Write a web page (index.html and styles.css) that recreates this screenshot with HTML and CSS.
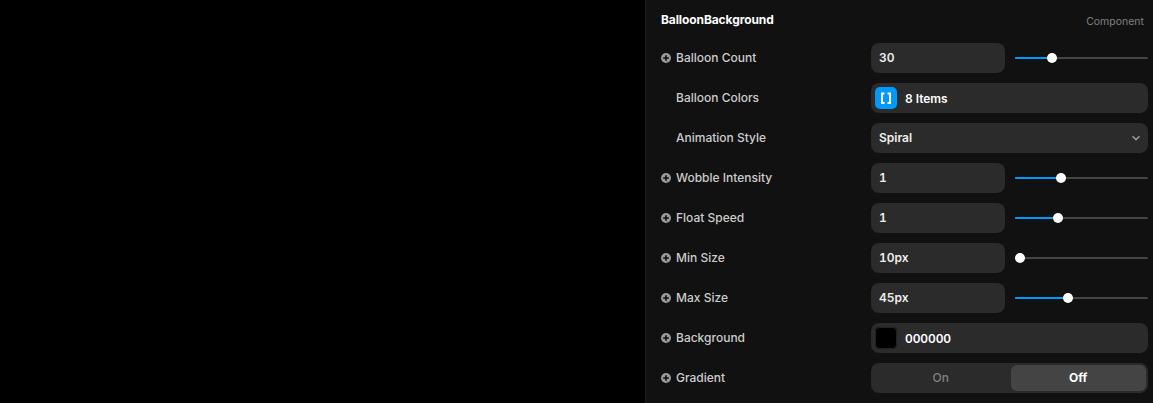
FILE: index.html
```html
<!DOCTYPE html>
<html lang="en">
<head>
    <meta charset="UTF-8">
    <title>BalloonBackground</title>
    <link rel="stylesheet" href="styles.css">
</head>
<body>
    <div class="canvas"></div>
    <div class="panel">
        <div class="panel-head">
            <span class="panel-title">BalloonBackground</span>
            <span class="panel-type">Component</span>
        </div>

        <div class="row">
            <div class="label"><svg class="plus" viewBox="0 0 10 10"><circle cx="5" cy="5" r="5"/><path d="M5 2.2v5.6M2.2 5h5.6"/></svg>Balloon Count</div>
            <div class="controls">
                <div class="field half">30</div>
                <div class="slider"><div class="fill" style="width: 37px"></div><div class="thumb"></div></div>
            </div>
        </div>

        <div class="row">
            <div class="label no-icon">Balloon Colors</div>
            <div class="controls">
                <div class="field wide swatch-field">
                    <span class="swatch blue"><svg viewBox="0 0 22 22"><path d="M9.500 6.500H7v9.500h2.500M12.500 6.500H15v9.500h-2.500"/></svg></span>
                    8 Items
                </div>
            </div>
        </div>

        <div class="row">
            <div class="label no-icon">Animation Style</div>
            <div class="controls">
                <div class="field wide select">
                    Spiral
                    <svg class="chevron" viewBox="0 0 10 6"><path d="M1.5 1.2 5 4.6l3.5-3.4"/></svg>
                </div>
            </div>
        </div>

        <div class="row">
            <div class="label"><svg class="plus" viewBox="0 0 10 10"><circle cx="5" cy="5" r="5"/><path d="M5 2.2v5.6M2.2 5h5.6"/></svg>Wobble Intensity</div>
            <div class="controls">
                <div class="field half">1</div>
                <div class="slider"><div class="fill" style="width: 46px"></div><div class="thumb"></div></div>
            </div>
        </div>

        <div class="row">
            <div class="label"><svg class="plus" viewBox="0 0 10 10"><circle cx="5" cy="5" r="5"/><path d="M5 2.2v5.6M2.2 5h5.6"/></svg>Float Speed</div>
            <div class="controls">
                <div class="field half">1</div>
                <div class="slider"><div class="fill" style="width: 43px"></div><div class="thumb"></div></div>
            </div>
        </div>

        <div class="row">
            <div class="label"><svg class="plus" viewBox="0 0 10 10"><circle cx="5" cy="5" r="5"/><path d="M5 2.2v5.6M2.2 5h5.6"/></svg>Min Size</div>
            <div class="controls">
                <div class="field half">10px</div>
                <div class="slider"><div class="fill" style="width: 5px"></div><div class="thumb"></div></div>
            </div>
        </div>

        <div class="row">
            <div class="label"><svg class="plus" viewBox="0 0 10 10"><circle cx="5" cy="5" r="5"/><path d="M5 2.2v5.6M2.2 5h5.6"/></svg>Max Size</div>
            <div class="controls">
                <div class="field half">45px</div>
                <div class="slider"><div class="fill" style="width: 53px"></div><div class="thumb"></div></div>
            </div>
        </div>

        <div class="row">
            <div class="label"><svg class="plus" viewBox="0 0 10 10"><circle cx="5" cy="5" r="5"/><path d="M5 2.2v5.6M2.2 5h5.6"/></svg>Background</div>
            <div class="controls">
                <div class="field wide swatch-field">
                    <span class="swatch black"></span>
                    000000
                </div>
            </div>
        </div>

        <div class="row">
            <div class="label"><svg class="plus" viewBox="0 0 10 10"><circle cx="5" cy="5" r="5"/><path d="M5 2.2v5.6M2.2 5h5.6"/></svg>Gradient</div>
            <div class="controls">
                <div class="field wide toggle">
                    <div class="toggle-off">On</div>
                    <div class="toggle-on">Off</div>
                </div>
            </div>
        </div>
    </div>
</body>
</html>
```

FILE: styles.css
```css
html, body {
    height: 100%;
}
body {
    margin: 0;
    display: flex;
    height: 403px;
    overflow: hidden;
    background-color: #000;
    font-family: Inter, "Liberation Sans", sans-serif;
    font-size: 12px;
}
.canvas {
    width: 645px;
    flex-shrink: 0;
    background-color: #000;
}
.panel {
    flex: 1;
    display: flex;
    flex-direction: column;
    gap: 10px;
    padding: 0 5px 0 15px;
    background-color: #111;
    border-left: 1px solid #1c1c1c;
}
.panel-head {
    display: flex;
    justify-content: space-between;
    align-items: center;
    height: 33px;
    padding: 6px 4px 0 0;
    box-sizing: border-box;
}
.panel-title {
    font-weight: 700;
    color: #fff;
    letter-spacing: -0.1px;
    margin-bottom: 1px;
}
.panel-type {
    font-size: 10.5px;
    color: #808080;
    margin-top: 3px;
}
.row {
    display: flex;
    align-items: center;
    height: 30px;
    flex-shrink: 0;
}
.label {
    width: 210px;
    box-sizing: border-box;
    display: flex;
    align-items: center;
    gap: 5px;
    padding-bottom: 1px;
    font-weight: 500;
    color: #ccc;
}
.label.no-icon {
    padding-left: 15px;
}
.plus {
    width: 10px;
    height: 10px;
    flex-shrink: 0;
    margin-top: 1px;
}
.plus circle {
    fill: #999;
}
.plus path {
    stroke: #111;
    stroke-width: 1.6;
    fill: none;
}
.controls {
    flex: 1;
    display: flex;
    align-items: center;
    gap: 10px;
}
.field {
    height: 30px;
    box-sizing: border-box;
    display: flex;
    align-items: center;
    padding: 0 8px 1px;
    background-color: #2b2b2b;
    border-radius: 8px;
    color: #eee;
    font-weight: 600;
    font-variant-numeric: tabular-nums;
}
.half {
    width: 134px;
    flex-shrink: 0;
}
.wide {
    flex: 1;
}
.swatch-field {
    padding: 0 8px 0 4px;
    gap: 8px;
    color: #fff;
    letter-spacing: -0.1px;
}
.swatch {
    width: 22px;
    height: 22px;
    border-radius: 5px;
    flex-shrink: 0;
}
.swatch svg {
    display: block;
    width: 22px;
    height: 22px;
}
.swatch svg path {
    fill: none;
    stroke: #fff;
    stroke-width: 2;
}
.blue {
    background-color: #0099ff;
}
.black {
    background-color: #000;
    box-shadow: inset 0 0 0 1px #222;
}
.select {
    justify-content: space-between;
    padding-right: 7px;
}
.chevron {
    width: 10px;
    height: 6px;
    margin-top: 1px;
}
.chevron path {
    fill: none;
    stroke: #999;
    stroke-width: 1.5;
}
.slider {
    flex: 1;
    position: relative;
    height: 2px;
    background-color: #444;
    border-radius: 1px;
    display: flex;
}
.fill {
    position: relative;
    height: 2px;
    background-color: #0099ff;
    border-radius: 1px;
}
.thumb {
    position: relative;
    width: 10px;
    height: 10px;
    margin: -4px 0 0 -5px;
    border-radius: 50%;
    background-color: #fff;
}
.toggle {
    padding: 2px;
    gap: 2px;
}
.toggle-off, .toggle-on {
    flex: 1;
    height: 26px;
    box-sizing: border-box;
    padding-bottom: 1px;
    display: flex;
    align-items: center;
    justify-content: center;
    border-radius: 6px;
}
.toggle-off {
    color: #808080;
    font-weight: 500;
}
.toggle-on {
    color: #fff;
    font-weight: 700;
    background-color: #444;
}
```
